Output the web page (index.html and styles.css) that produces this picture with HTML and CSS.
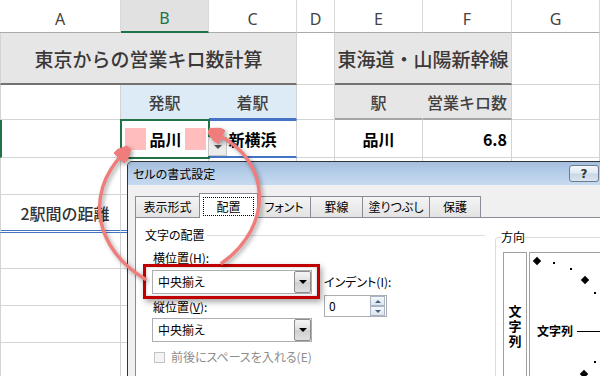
FILE: index.html
```html
<!DOCTYPE html>
<html lang="ja">
<head>
<meta charset="utf-8">
<title>セルの書式設定</title>
<link rel="stylesheet" href="styles.css">
</head>
<body>
<div class="sheet">
  <div class="ch">A</div>
  <div class="ch sel">B</div>
  <div class="ch">C</div>
  <div class="ch">D</div>
  <div class="ch">E</div>
  <div class="ch">F</div>
  <div class="ch">G</div>

  <div class="c first title span3">東京からの営業キロ数計算</div>
  <div class="c"></div>
  <div class="c title span2">東海道・山陽新幹線</div>
  <div class="c"></div>

  <div class="c first"></div>
  <div class="c hd-blue inner-blue">発駅</div>
  <div class="c hd-blue bline">着駅</div>
  <div class="c"></div>
  <div class="c hd-gray inner-gray">駅</div>
  <div class="c hd-gray">営業キロ数</div>
  <div class="c"></div>

  <div class="c first rowsel"></div>
  <div class="c active"><span class="pad"></span><span class="bold">品川</span><span class="pad"></span><span class="dd"></span></div>
  <div class="c bold bline btop">新横浜</div>
  <div class="c"></div>
  <div class="c bold">品川</div>
  <div class="c bold right">6.8</div>
  <div class="c"></div>

  <div class="c first"></div><div class="c"></div><div class="c"></div><div class="c"></div><div class="c"></div><div class="c"></div><div class="c"></div>

  <div class="c first dist dbl">2駅間の距離</div><div class="c dbl"></div><div class="c dbl"></div><div class="c"></div><div class="c"></div><div class="c"></div><div class="c"></div>

  <div class="c first"></div><div class="c"></div><div class="c"></div><div class="c"></div><div class="c"></div><div class="c"></div><div class="c"></div>
  <div class="c first"></div><div class="c"></div><div class="c"></div><div class="c"></div><div class="c"></div><div class="c"></div><div class="c"></div>
  <div class="c first"></div><div class="c"></div><div class="c"></div><div class="c"></div><div class="c"></div><div class="c"></div><div class="c"></div>
  <div class="c first"></div><div class="c"></div><div class="c"></div><div class="c"></div><div class="c"></div><div class="c"></div><div class="c"></div>
</div>

<div class="dialog">
  <div class="titlebar">
    <span class="ttl">セルの書式設定</span>
    <span class="help">?</span>
  </div>
  <div class="dbody">
    <div class="tabs">
      <div class="tab w1">表示形式</div>
      <div class="tab on w2"><span class="focus">配置</span></div>
      <div class="tab w3">フォント</div>
      <div class="tab w4">罫線</div>
      <div class="tab w5">塗りつぶし</div>
      <div class="tab w6">保護</div>
    </div>
    <div class="panel">
      <fieldset class="grp-align">
        <legend>文字の配置</legend>
        <div class="form">
          <div class="colL">
            <div class="lbl">横位置(<u>H</u>):</div>
            <div class="combo c1">
              <span class="ctext">中央揃え</span>
              <span class="dbtn"><i class="tri"></i></span>
              <span class="redbox"></span>
            </div>
            <div class="lbl mt6">縦位置(<u>V</u>):</div>
            <div class="combo c2">
              <span class="ctext">中央揃え</span>
              <span class="dbtn"><i class="tri"></i></span>
            </div>
            <div class="check"><span class="box"></span><span class="clbl">前後にスペースを入れる(E)</span></div>
          </div>
          <div class="colR">
            <div class="lbl">インデント(I):</div>
            <div class="spin"><span class="sval">0</span><span class="sbtns"><span class="sb"><i class="up"></i></span><span class="sb"><i class="dn"></i></span></span></div>
          </div>
        </div>
      </fieldset>
      <fieldset class="grp-orient">
        <legend>方向</legend>
        <div class="orient">
          <div class="vbox"><span class="vtext">文字列</span></div>
          <div class="dial">
            <i class="dia" style="left:4px;top:5px"></i>
            <i class="dot" style="left:23px;top:9px"></i>
            <i class="dot" style="left:40px;top:15px"></i>
            <i class="dia" style="left:52px;top:24px"></i>
            <i class="dot" style="left:64px;top:39px"></i>
            <span class="dtext">文字列</span>
            <i class="dline"></i>
            <i class="dot" style="left:64px;top:108px"></i>
            <i class="dia" style="left:51px;top:118px"></i>
          </div>
        </div>
      </fieldset>
    </div>
  </div>
</div>

<svg class="arrows" width="600" height="376" viewBox="0 0 600 376">
  <defs>
    <marker id="ah" viewBox="0 0 10 10" refX="3" refY="5" markerWidth="15" markerHeight="15" markerUnits="userSpaceOnUse" orient="auto">
      <path d="M0,0 L10,5 L0,10 z" fill="#f07c7c"/>
    </marker>
  </defs>
  <path d="M145 279 C 96 250, 84 195, 122 155" marker-end="url(#ah)"/>
  <path d="M222 263 C 275 225, 270 160, 218 135" marker-end="url(#ah)"/>
</svg>
</body>
</html>
```

FILE: styles.css
```css
* { box-sizing: border-box; }
html, body { margin: 0; padding: 0; }
body {
  width: 600px; height: 376px; overflow: hidden; position: relative;
  background: #fff;
  font-family: "Noto Sans CJK JP", "Noto Sans", sans-serif;
}

/* ---------- spreadsheet ---------- */
.sheet {
  display: grid;
  grid-template-columns: 121px 88px 88px 38px 88px 89px 88px;
  grid-template-rows: 33px 52px 35px 38px 37px 38px 36px 37px 37px 37px;
}
.ch {
  display: flex; align-items: center; justify-content: center;
  padding-top: 5px;
  font-family: "Noto Sans", sans-serif; font-size: 16px; color: #444;
  border-right: 1px solid #dadada; border-bottom: 1px solid #ababab;
}
.ch.sel { background: #e1e1e1; color: #217346; border-bottom: 2px solid #217346; }

.c {
  position: relative;
  display: flex; align-items: center; justify-content: center;
  border-right: 1px solid #d4d4d4; border-bottom: 1px solid #d4d4d4;
  font-size: 16px; line-height: 1; color: #404040; font-weight: 500;
}
.first { border-left: 1px solid #d4d4d4; }
.span3 { grid-column: span 3; }
.span2 { grid-column: span 2; }
.title {
  background: #e7e6e6; border-bottom: 2px solid #767171;
  font-size: 19px; color: #3b3838;
}
.hd-blue { background: #ddebf7; }
.inner-blue { border-right-color: #ddebf7; }
.hd-gray { background: #e7e6e6; border-bottom: 2px solid #a5a5a5; }
.inner-gray { border-right-color: #e7e6e6; }
.bline { border-bottom: 2px solid #4472c4; }
.btop { border-top: 1px solid #4472c4; }
.bold { font-weight: 700; color: #000; }
.right { justify-content: flex-end; padding-right: 4px; }
.rowsel { border-left: 2px solid #217346; }
.dist { padding-left: 9px; color: #333; }
.dbl { border-bottom: 3px double #4472c4; }

.active {
  justify-content: space-between;
  padding: 0 2px 0 4px;
  outline: 2px solid #217346; outline-offset: -1px;
  z-index: 2;
}
.active .pad { width: 21px; height: 22px; background: #ffbdbd; }
.active .dd {
  position: absolute; right: -19px; top: 17px;
  width: 19px; height: 19px;
  background: #ececec; border: 1px solid #c6c6c6;
}
.active .dd::after {
  content: ""; position: absolute; left: 5px; top: 7px;
  border-left: 4px solid transparent; border-right: 4px solid transparent;
  border-top: 4px solid #555;
}

/* ---------- dialog ---------- */
.dialog {
  position: absolute; left: 127px; top: 161px;
  width: 520px; height: 240px;
  display: flex; flex-direction: column;
  background: #f0f0f0;
  border: 1px solid #333;
  border-radius: 5px 5px 0 0;
  font-size: 12px; line-height: 14px; color: #000;
  font-feature-settings: "palt";
  z-index: 5;
}
.titlebar {
  height: 23px; flex: none;
  display: flex; align-items: center;
  padding-left: 5px;
  background: linear-gradient(#a3bedd, #b9d0ea 55%, #c6d9ee);
  border-radius: 4px 4px 0 0;
}
.ttl { flex: 1; padding-top: 1px; }
.help {
  width: 30px; height: 17px; margin-right: 47px;
  border: 1px solid #6b7c91; border-radius: 3px;
  background: linear-gradient(#f4f7fb, #dfe8f2 48%, #c9d6e5 52%, #dbe5f0);
  display: flex; align-items: center; justify-content: center;
  font-family: "DejaVu Sans", sans-serif; font-weight: bold; font-size: 12px; color: #333;
}
.dbody { flex: 1; display: flex; flex-direction: column; padding: 8px 0 0 7px; min-width: 0; }
.tabs { display: flex; align-items: flex-end; height: 24px; position: relative; z-index: 1; flex: none; }
.tab {
  flex: none;
  height: 21px; margin-right: -1px;
  display: flex; align-items: center; justify-content: center;
  border: 1px solid #898c95; border-bottom: none;
  background: linear-gradient(#f4f4f4, #e3e3e3);
}
.tab.on { height: 25px; margin-bottom: -1px; background: #fff; position: relative; z-index: 2; }
.focus {
  display: flex; align-items: center; justify-content: center;
  width: 51px; height: 19px; border: 1px dotted #000; margin-top: 1px;
}
.w1 { width: 65px; } .w2 { width: 59px; } .w3 { width: 54px; }
.w4 { width: 53px; } .w5 { width: 68px; } .w6 { width: 52px; }

.panel {
  flex: 1; display: flex; align-items: flex-start;
  background: #fff; border: 1px solid #898c95;
  padding: 9px 0 0 9px;
  overflow: hidden;
}
fieldset { margin: 0; min-width: 0; flex: none; }
legend { line-height: 16px; }
.grp-align {
  width: 340px; padding: 0;
  border: none; border-top: 1px solid #dcdcdc;
}
.grp-align legend { padding: 0 2px 0 0; }
.form { display: flex; }
.colL { margin-left: 7px; width: 160px; flex: none; }
.colR { margin-left: 11px; padding-top: 24px; }
.lbl { line-height: 14px; margin-top: 8px; padding-left: 1px; white-space: nowrap; }
.mt6 { margin-top: 6px; }
.combo {
  position: relative;
  height: 24px; margin-top: 5px;
  display: flex; align-items: center;
  border: 1px solid #abadb3; background: #fff;
}
.combo.c2 { margin-top: 4px; }
.ctext { flex: 1; padding-left: 5px; }
.dbtn {
  width: 17px; height: 22px;
  border: 1px solid #8d8d8d; border-radius: 2px;
  background: linear-gradient(#f6f6f6, #dedede 50%, #cfcfcf 51%, #e0e0e0);
  display: flex; align-items: center; justify-content: center;
}
.tri {
  width: 0; height: 0;
  border-left: 4px solid transparent; border-right: 4px solid transparent;
  border-top: 4px solid #000;
}
.redbox {
  position: absolute; left: -10px; top: -7px; right: -9px; bottom: -6px;
  border: 3px solid #c00000;
  box-shadow: 2px 3px 6px rgba(0,0,0,0.35), inset 0 0 3px rgba(0,0,0,0.25);
}
.check { display: flex; align-items: center; margin-top: 8px; height: 14px; padding-left: 2px; white-space: nowrap; }
.box { width: 11px; height: 11px; border: 1px solid #c3c3c3; background: #f4f4f4; flex: none; }
.clbl { margin-left: 6px; color: #8c8c8c; }

.spin {
  margin-top: 6px; margin-left: 1px;
  width: 63px; height: 22px;
  display: flex; align-items: center;
  border: 1px solid #abadb3; background: #fff;
}
.sval { flex: 1; padding-left: 4px; }
.sbtns { width: 15px; height: 20px; display: flex; flex-direction: column; margin-right: 1px; }
.sb {
  flex: 1; display: flex; align-items: center; justify-content: center;
  border: 1px solid #a9b5c5; background: linear-gradient(#f5f8fb, #dbe4ee);
}
.up { border-left: 3px solid transparent; border-right: 3px solid transparent; border-bottom: 3px solid #4a5f7d; }
.dn { border-left: 3px solid transparent; border-right: 3px solid transparent; border-top: 3px solid #4a5f7d; }

.grp-orient {
  margin-left: 10px; margin-top: 2px;
  padding: 0 0 0 5px;
  border: 1px solid #dcdcdc; border-radius: 3px;
  width: 160px; height: 200px;
}
.grp-orient legend { padding: 0; }
.orient { display: flex; margin-top: 7px; margin-left: 2px; }
.vbox {
  flex: none;
  width: 24px; height: 140px;
  border: 1px solid #a0a0a0; background: #fff;
  display: flex; justify-content: center;
  padding-top: 52px;
}
.vtext {
  writing-mode: vertical-rl;
  font-size: 13px; line-height: 13px; letter-spacing: 2px; font-weight: 700;
  font-feature-settings: normal;
}
.dial {
  flex: none;
  position: relative;
  margin-left: 2px;
  width: 120px; height: 140px;
  border: 1px solid #a0a0a0; background: #fff;
}
.dia { position: absolute; width: 6px; height: 6px; background: #000; transform: rotate(45deg); }
.dot { position: absolute; width: 2px; height: 2px; background: #000; }
.dtext { position: absolute; left: 7px; top: 71px; font-size: 12px; line-height: 14px; font-weight: 700; white-space: nowrap; }
.dline { position: absolute; left: 47px; top: 78px; width: 80px; height: 1px; background: #000; }

/* ---------- annotation arrows ---------- */
.arrows {
  position: absolute; left: 0; top: 0;
  z-index: 10; pointer-events: none;
  fill: none; stroke: #f07c7c; stroke-width: 3.4; stroke-linecap: round;
  filter: drop-shadow(2px 2px 2px rgba(0,0,0,0.35));
}
```
